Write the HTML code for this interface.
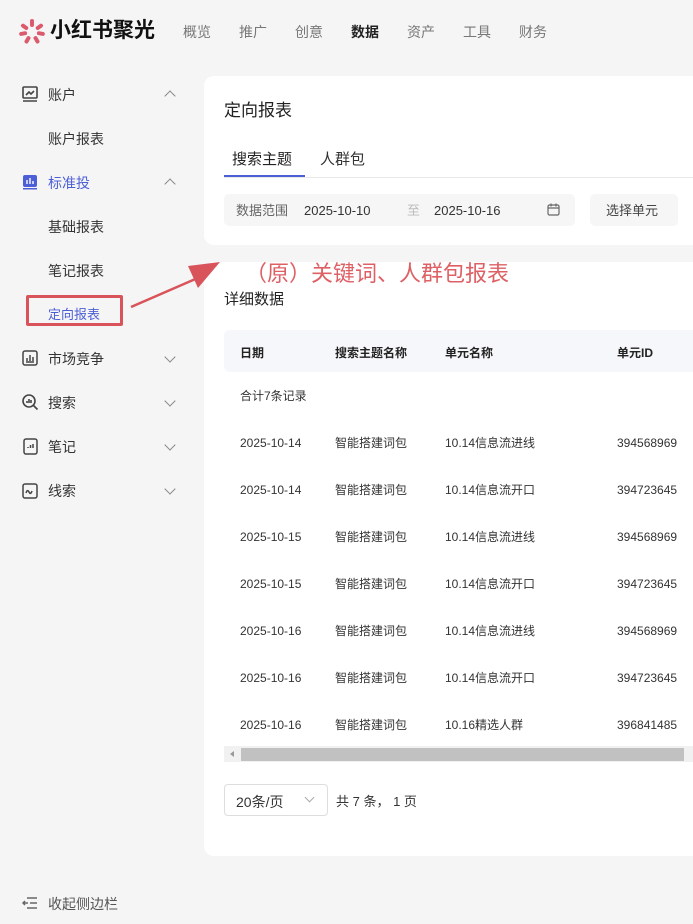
<!DOCTYPE html>
<html><head><meta charset="utf-8"><style>
*{margin:0;padding:0;box-sizing:border-box}
body{width:693px;height:924px;background:#f5f5f5;font-family:"Liberation Sans","Noto Sans CJK SC",sans-serif;position:relative;overflow:hidden;color:#333}
.a{position:absolute;white-space:nowrap;line-height:20px}
.t{margin-top:2px}
.nav{font-size:14px;color:#777;top:20px}
.si{font-size:14px;color:#333}
.chev{position:absolute;width:8px;height:8px;border-left:1.5px solid #888;border-top:1.5px solid #888}
.up{transform:rotate(45deg)}
.dn{transform:rotate(225deg)}
.card{position:absolute;background:#fff;border-radius:10px}
.td{font-size:12px;color:#333;margin-top:2px}
.si,.nav{margin-top:2px}
</style></head><body>
<svg class="a" style="left:18px;top:18px" width="28" height="28" viewBox="-14 -14 28 28">
<g fill="#dc5a6e">
<rect x="-2" y="-13" width="4" height="8" rx="2"/>
<rect x="-2" y="-13" width="4" height="8" rx="2" transform="rotate(55)"/>
<rect x="-2" y="-13" width="4" height="8" rx="2" transform="rotate(-55)"/>
<rect x="-2" y="-13" width="4" height="8" rx="2" transform="rotate(100)"/>
<rect x="-2" y="-13" width="4" height="8" rx="2" transform="rotate(-100)"/>
<rect x="-2" y="-13" width="4" height="8" rx="2" transform="rotate(150)"/>
<rect x="-2" y="-13" width="4" height="8" rx="2" transform="rotate(-150)"/>
</g></svg>
<div class="a" style="left:50px;top:16px;font-size:21px;line-height:30px;font-weight:bold;color:#111">小红书聚光</div>
<div class="a nav" style="left:183px">概览</div>
<div class="a nav" style="left:239px">推广</div>
<div class="a nav" style="left:295px">创意</div>
<div class="a nav" style="left:351px;color:#222;font-weight:bold">数据</div>
<div class="a nav" style="left:407px">资产</div>
<div class="a nav" style="left:463px">工具</div>
<div class="a nav" style="left:519px">财务</div>

<svg class="a" style="left:22px;top:86px" width="16" height="16" viewBox="0 0 16 16" fill="none" stroke="#444" stroke-width="1.6"><rect x="1" y="1" width="14" height="11" rx="1"/><path d="M4 9l3-3 2 2 3-3M1 15h14"/></svg>
<div class="a si" style="left:48px;top:83px">账户</div><div class="chev up" style="left:166px;top:92px"></div>
<div class="a si" style="left:48px;top:127px">账户报表</div>
<svg class="a" style="left:22px;top:174px" width="16" height="16" viewBox="0 0 16 16"><rect x="1" y="1" width="14" height="12" rx="2" fill="#4d5fd6"/><rect x="1" y="14" width="14" height="1.5" fill="#4d5fd6"/><path d="M5 10V6M8 10V4M11 10V7" stroke="#fff" stroke-width="1.4"/></svg>
<div class="a si" style="left:48px;top:171px;color:#4d5fd6">标准投</div><div class="chev up" style="left:166px;top:180px"></div>
<div class="a si" style="left:48px;top:215px">基础报表</div>
<div class="a si" style="left:48px;top:259px">笔记报表</div>
<div class="a" style="left:26px;top:295px;width:97px;height:31px;border:3px solid #d9545a;border-radius:2px"></div>
<div class="a si" style="left:48px;top:303px;color:#4d5fd6;font-size:13px">定向报表</div>
<svg class="a" style="left:22px;top:350px" width="16" height="16" viewBox="0 0 16 16" fill="none" stroke="#444" stroke-width="1.5"><rect x="1" y="1" width="14" height="14" rx="2"/><path d="M4 12h8M5 11V8M8 11V5M11 11V7"/></svg>
<div class="a si" style="left:48px;top:347px">市场竞争</div><div class="chev dn" style="left:166px;top:353px"></div>
<svg class="a" style="left:22px;top:394px" width="17" height="17" viewBox="0 0 17 17" fill="none" stroke="#444" stroke-width="1.6"><circle cx="7" cy="7" r="6"/><path d="M11.5 11.5l4 4M5 9V7M7 9V5M9 9V6"/></svg>
<div class="a si" style="left:48px;top:391px">搜索</div><div class="chev dn" style="left:166px;top:397px"></div>
<svg class="a" style="left:23px;top:438px" width="15" height="17" viewBox="0 0 15 17" fill="none" stroke="#444" stroke-width="1.5"><rect x="1" y="1" width="13" height="15" rx="2"/><path d="M5 10V9M7.5 10V7M10 10V6"/></svg>
<div class="a si" style="left:48px;top:435px">笔记</div><div class="chev dn" style="left:166px;top:441px"></div>
<svg class="a" style="left:22px;top:483px" width="16" height="16" viewBox="0 0 16 16" fill="none" stroke="#444" stroke-width="1.5"><rect x="1" y="1" width="14" height="14" rx="2"/><path d="M4 10c1-3 2-3 3-1s2 2 3-1"/></svg>
<div class="a si" style="left:48px;top:479px">线索</div><div class="chev dn" style="left:166px;top:485px"></div>
<svg class="a" style="left:22px;top:896px" width="16" height="14" viewBox="0 0 16 14" fill="none" stroke="#666" stroke-width="1.5"><path d="M5 2h10M8 7h7M5 12h10M1 7h5M3 5L1 7l2 2"/></svg>
<div class="a si" style="left:48px;top:892px;color:#555">收起侧边栏</div>

<div class="card" style="left:204px;top:76px;width:500px;height:169px"></div>
<div class="a t" style="left:224px;top:98px;font-size:17px;line-height:22px;color:#222">定向报表</div>
<div class="a t" style="left:232px;top:148px;font-size:15px;color:#222">搜索主题</div>
<div class="a t" style="left:320px;top:148px;font-size:15px;color:#333">人群包</div>
<div class="a" style="left:224px;top:177px;width:469px;height:1px;background:#e8e8e8"></div>
<div class="a" style="left:224px;top:175px;width:81px;height:2px;background:#4d5fd6"></div>
<div class="a" style="left:224px;top:194px;width:351px;height:32px;background:#f6f6f6;border-radius:5px"></div>
<div class="a t" style="left:236px;top:199px;font-size:13px;color:#666">数据范围</div>
<div class="a t" style="left:304px;top:199px;font-size:13px;color:#333">2025-10-10</div>
<div class="a t" style="left:407px;top:199px;font-size:13px;color:#bbb">至</div>
<div class="a t" style="left:434px;top:199px;font-size:13px;color:#333">2025-10-16</div>
<svg class="a" style="left:547px;top:203px" width="13" height="13" viewBox="0 0 13 13" fill="none" stroke="#666" stroke-width="1.2"><rect x="1" y="2" width="11" height="10" rx="1.5"/><path d="M1 5h11M4 0.5v3M9 0.5v3"/></svg>
<div class="a" style="left:590px;top:194px;width:88px;height:32px;background:#f6f6f6;border-radius:5px"></div>
<div class="a t" style="left:606px;top:199px;font-size:13px;color:#444">选择单元</div>

<div class="card" style="left:204px;top:262px;width:500px;height:594px"></div>
<div class="a t" style="left:245px;top:257px;font-size:22px;line-height:30px;color:#dd6065">（原）关键词、人群包报表</div>
<div class="a t" style="left:224px;top:288px;font-size:15px;color:#222">详细数据</div>
<div class="a" style="left:224px;top:330px;width:480px;height:42px;background:#f6f7fa;border-radius:6px"></div>
<div class="a t" style="left:240px;top:341px;font-size:12px;font-weight:bold;color:#222">日期</div>
<div class="a t" style="left:335px;top:341px;font-size:12px;font-weight:bold;color:#222">搜索主题名称</div>
<div class="a t" style="left:445px;top:341px;font-size:12px;font-weight:bold;color:#222">单元名称</div>
<div class="a t" style="left:617px;top:341px;font-size:12px;font-weight:bold;color:#222">单元ID</div>
<div class="a td" style="left:240px;top:384px">合计7条记录</div>

<div class="a td" style="left:240px;top:431px">2025-10-14</div><div class="a td" style="left:335px;top:431px">智能搭建词包</div><div class="a td" style="left:445px;top:431px">10.14信息流进线</div><div class="a td" style="left:617px;top:431px">394568969</div>
<div class="a td" style="left:240px;top:478px">2025-10-14</div><div class="a td" style="left:335px;top:478px">智能搭建词包</div><div class="a td" style="left:445px;top:478px">10.14信息流开口</div><div class="a td" style="left:617px;top:478px">394723645</div>
<div class="a td" style="left:240px;top:525px">2025-10-15</div><div class="a td" style="left:335px;top:525px">智能搭建词包</div><div class="a td" style="left:445px;top:525px">10.14信息流进线</div><div class="a td" style="left:617px;top:525px">394568969</div>
<div class="a td" style="left:240px;top:572px">2025-10-15</div><div class="a td" style="left:335px;top:572px">智能搭建词包</div><div class="a td" style="left:445px;top:572px">10.14信息流开口</div><div class="a td" style="left:617px;top:572px">394723645</div>
<div class="a td" style="left:240px;top:619px">2025-10-16</div><div class="a td" style="left:335px;top:619px">智能搭建词包</div><div class="a td" style="left:445px;top:619px">10.14信息流进线</div><div class="a td" style="left:617px;top:619px">394568969</div>
<div class="a td" style="left:240px;top:666px">2025-10-16</div><div class="a td" style="left:335px;top:666px">智能搭建词包</div><div class="a td" style="left:445px;top:666px">10.14信息流开口</div><div class="a td" style="left:617px;top:666px">394723645</div>
<div class="a td" style="left:240px;top:713px">2025-10-16</div><div class="a td" style="left:335px;top:713px">智能搭建词包</div><div class="a td" style="left:445px;top:713px">10.16精选人群</div><div class="a td" style="left:617px;top:713px">396841485</div>

<div class="a" style="left:224px;top:746px;width:469px;height:16px;background:#f1f1f1"></div>
<div class="a" style="left:230px;top:751px;width:0;height:0;line-height:0;border-right:4px solid #999;border-top:3px solid transparent;border-bottom:3px solid transparent"></div>
<div class="a" style="left:241px;top:748px;width:443px;height:13px;background:#c1c1c1"></div>

<div class="a" style="left:224px;top:784px;width:104px;height:32px;border:1px solid #ddd;border-radius:4px"></div>
<div class="a t" style="left:236px;top:790px;font-size:14px;color:#333">20条/页</div>
<div class="a" style="left:306px;top:794px;width:7px;height:7px;border-right:1px solid #aaa;border-bottom:1px solid #aaa;transform:rotate(45deg)"></div>
<div class="a t" style="left:336px;top:790px;font-size:13px;color:#333">共 7 条， 1 页</div>

<svg class="a" style="left:0;top:0" width="693" height="924"><path d="M131 307L200 277" stroke="#d9545a" stroke-width="2.5"/><path d="M220 262L188 266L198 288Z" fill="#d9545a"/></svg>
</body></html>
